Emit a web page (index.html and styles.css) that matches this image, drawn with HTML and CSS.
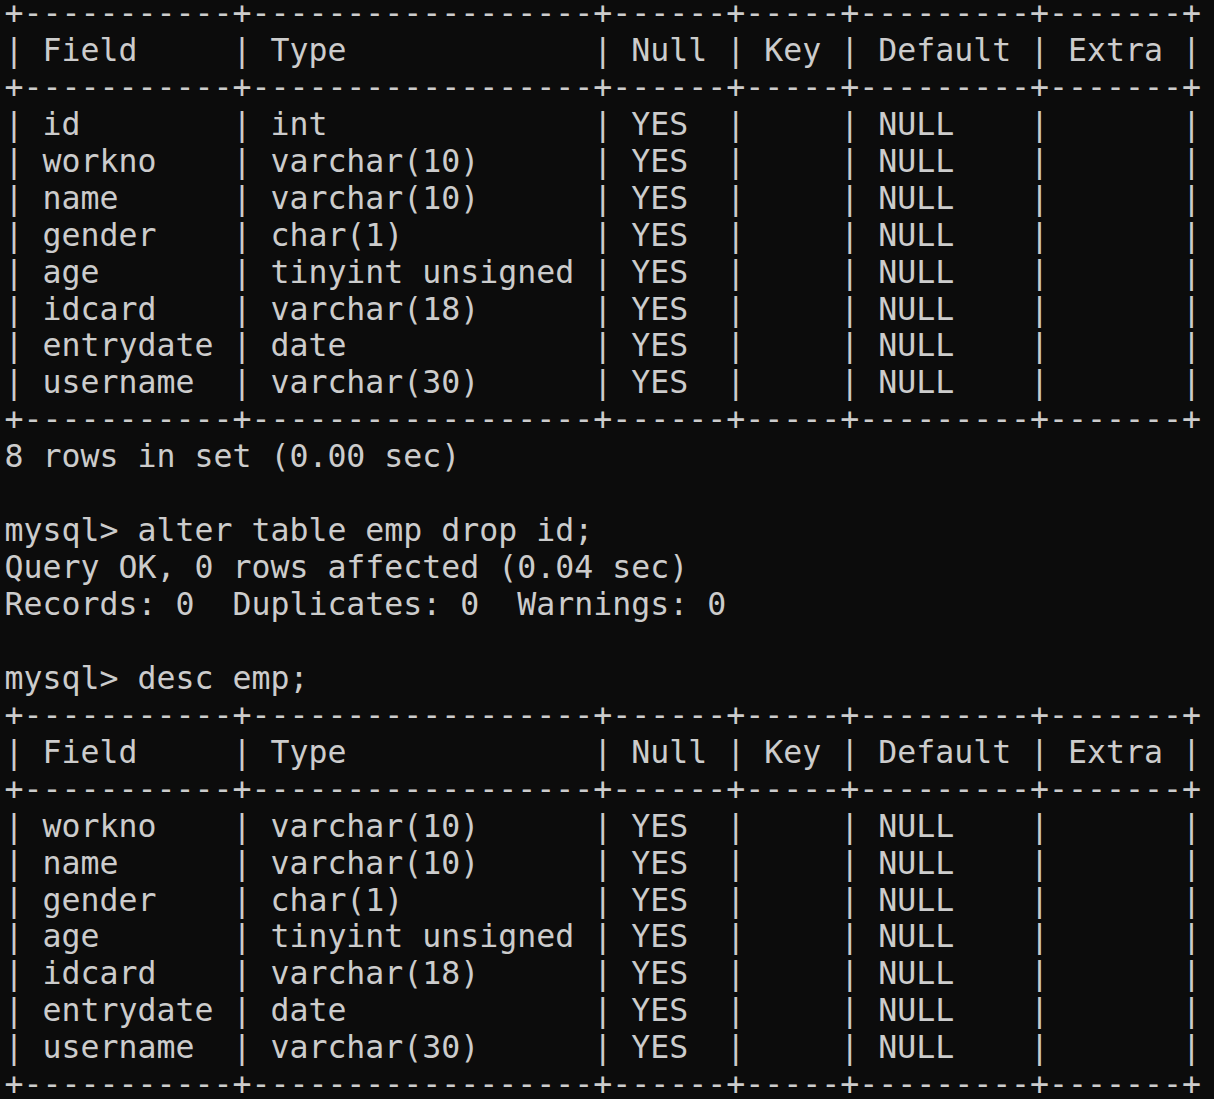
FILE: index.html
```html
<!DOCTYPE html>
<html lang="en">
<head>
<meta charset="utf-8">
<title>mysql terminal</title>
<link rel="stylesheet" href="styles.css">
</head>
<body>
<main class="terminal">
<pre class="output">+-----------+------------------+------+-----+---------+-------+
| Field     | Type             | Null | Key | Default | Extra |
+-----------+------------------+------+-----+---------+-------+
| id        | int              | YES  |     | NULL    |       |
| workno    | varchar(10)      | YES  |     | NULL    |       |
| name      | varchar(10)      | YES  |     | NULL    |       |
| gender    | char(1)          | YES  |     | NULL    |       |
| age       | tinyint unsigned | YES  |     | NULL    |       |
| idcard    | varchar(18)      | YES  |     | NULL    |       |
| entrydate | date             | YES  |     | NULL    |       |
| username  | varchar(30)      | YES  |     | NULL    |       |
+-----------+------------------+------+-----+---------+-------+
8 rows in set (0.00 sec)

mysql&gt; alter table emp drop id;
Query OK, 0 rows affected (0.04 sec)
Records: 0  Duplicates: 0  Warnings: 0

mysql&gt; desc emp;
+-----------+------------------+------+-----+---------+-------+
| Field     | Type             | Null | Key | Default | Extra |
+-----------+------------------+------+-----+---------+-------+
| workno    | varchar(10)      | YES  |     | NULL    |       |
| name      | varchar(10)      | YES  |     | NULL    |       |
| gender    | char(1)          | YES  |     | NULL    |       |
| age       | tinyint unsigned | YES  |     | NULL    |       |
| idcard    | varchar(18)      | YES  |     | NULL    |       |
| entrydate | date             | YES  |     | NULL    |       |
| username  | varchar(30)      | YES  |     | NULL    |       |
+-----------+------------------+------+-----+---------+-------+</pre>
</main>
</body>
</html>
```

FILE: styles.css
```css
html {
  overflow: hidden;
  background: #0c0c0c;
}

body {
  margin: 0;
  background: #0c0c0c;
}

.terminal {
  padding-left: 4.5px;
  margin-top: -5px;
}

.output {
  margin: 0;
  color: #cccccc;
  font-family: "DejaVu Sans Mono", "Liberation Mono", monospace;
  font-size: 31.56px;
  line-height: 36.93px;
  white-space: pre;
}
```
